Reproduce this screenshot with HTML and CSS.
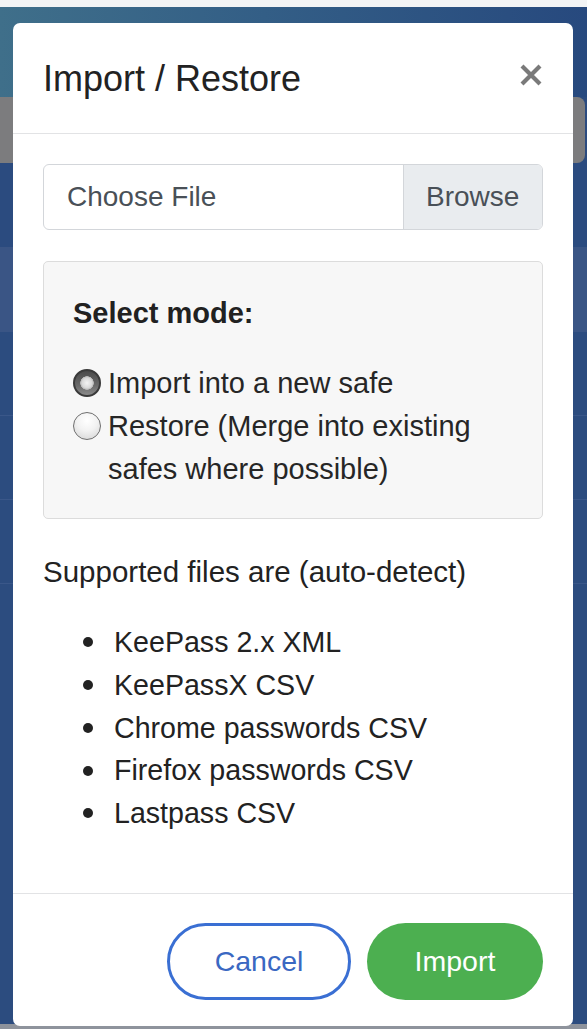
FILE: index.html
```html
<!DOCTYPE html>
<html>
<head>
<meta charset="utf-8">
<link rel="stylesheet" href="styles.css">
</head>
<body>
<div class="page">
  <div class="topstrip"></div>
  <div class="navbar">
  </div>
  <div class="toolbar"><div class="searchbar"></div></div>
  <div class="row row-a"></div>
  <div class="row row-b"></div>
  <div class="row"></div>
  <div class="row"></div>
  <div class="row"></div>
  <div class="row row-last"></div>
  <div class="bottomstrip"></div>

  <div class="modal">
    <div class="modal-header">
      <h1 class="modal-title">Import / Restore</h1>
      <button class="close" aria-label="Close">
        <svg width="22" height="22" viewBox="0 0 22 22"><path d="M2 2 L20 20 M20 2 L2 20" stroke="#7a7a7a" stroke-width="4.2" stroke-linecap="butt"/></svg>
      </button>
    </div>
    <div class="modal-body">
      <div class="file-input">
        <span class="file-label">Choose File</span>
        <span class="file-browse">Browse</span>
      </div>
      <div class="mode-box">
        <div class="mode-title">Select mode:</div>
        <div class="radios">
          <div class="radio-row">
            <span class="radio checked"></span>
            <span class="radio-text">Import into a new safe</span>
          </div>
          <div class="radio-row">
            <span class="radio"></span>
            <span class="radio-text">Restore (Merge into existing safes where possible)</span>
          </div>
        </div>
      </div>
      <p class="supported">Supported files are (auto-detect)</p>
      <ul class="types">
        <li>KeePass 2.x XML</li>
        <li>KeePassX CSV</li>
        <li>Chrome passwords CSV</li>
        <li>Firefox passwords CSV</li>
        <li>Lastpass CSV</li>
      </ul>
    </div>
    <div class="modal-footer">
      <button class="btn btn-cancel">Cancel</button>
      <button class="btn btn-import">Import</button>
    </div>
  </div>
</div>
</body>
</html>
```

FILE: styles.css
```css
html, body {
  margin: 0;
  padding: 0;
}
body {
  width: 587px;
  height: 1029px;
  overflow: hidden;
  background: #2c4c7f;
  font-family: "Liberation Sans", Arial, sans-serif;
  color: #212529;
}
.page {
  position: relative;
  width: 587px;
  height: 1029px;
  display: flex;
  flex-direction: column;
}
.topstrip {
  height: 7px;
  background: #f3f4f5;
}
.navbar {
  height: 90px;
  background: linear-gradient(90deg, #3f6f8a 0%, #335e86 45%, #27497e 100%);
}
.toolbar {
  height: 66px;
  background: #2b4b7f;
  display: flex;
}
.searchbar {
  flex: 1;
  margin: 0 2px 0 -10px;
  background: #7c7c7e;
  border-radius: 0 8px 8px 0;
}
.row {
  height: 83px;
  border-bottom: 1px solid #3a5789;
  background: #2c4c7f;
}
.row-a {
  height: 84px;
  border-bottom: none;
  background: #2b4b7f;
}
.row-b {
  height: 85px;
  background: #3a5585;
  border-bottom: none;
}
.row-last {
  flex: 1;
  border-bottom: none;
}
.bottomstrip {
  height: 5px;
  background: #8e939c;
}

/* modal overlays the page */
.modal {
  position: absolute;
  left: 13px;
  top: 23px;
  width: 560px;
  height: 1003px;
  background: #fff;
  border-radius: 7px;
  display: flex;
  flex-direction: column;
}
.modal-header {
  height: 110px;
  flex: none;
  border-bottom: 1px solid #e2e3e5;
  padding: 0 31px 0 30px;
  display: flex;
  align-items: center;
  justify-content: space-between;
}
.modal-title {
  margin: 0;
  font-size: 36px;
  font-weight: 400;
  color: #222;
  line-height: 44px;
  padding-top: 1px;
}
.close {
  border: none;
  background: none;
  padding: 0;
  width: 22px;
  height: 22px;
  margin-top: -6px;
  display: block;
}
.close svg { display: block; }

.modal-body {
  padding: 30px 30px 0 30px;
  flex: 1;
}
.file-input {
  height: 64px;
  border: 1px solid #d3d6da;
  border-radius: 6px;
  display: flex;
  align-items: stretch;
  font-size: 28px;
  color: #495057;
  overflow: hidden;
}
.file-label {
  flex: 1;
  padding-left: 23px;
  display: flex;
  align-items: center;
}
.file-browse {
  width: 116px;
  padding-left: 22px;
  background: #e9ecef;
  border-left: 1px solid #d3d6da;
  display: flex;
  align-items: center;
}

.mode-box {
  margin-top: 31px;
  height: 256px;
  box-sizing: content-box;
  border: 1px solid #dcdcdc;
  border-radius: 5px;
  background: #f7f7f7;
  padding: 0 29px;
  display: flex;
  flex-direction: column;
}
.mode-title {
  margin-top: 30px;
  font-size: 29px;
  font-weight: 700;
  line-height: 43px;
  color: #212121;
}
.radios {
  margin-top: 27px;
  display: flex;
  flex-direction: column;
}
.radio-row {
  display: flex;
  align-items: flex-start;
  font-size: 29px;
  line-height: 43px;
  color: #262626;
}
.radio {
  flex: none;
  width: 28px;
  height: 28px;
  margin-top: 7px;
  margin-right: 7px;
  border-radius: 50%;
  box-sizing: border-box;
  border: 1.5px solid #6f6f6f;
  background: radial-gradient(circle at 50% 30%, #ffffff 0%, #f2f2f2 45%, #d2d2d2 100%);
}
.radio.checked {
  border: 2px solid #3a3a3a;
  background:
    radial-gradient(circle at 50% 50%, #f3f3f3 0, #d8d8d8 5px, #b8b8b8 6.5px, transparent 7px),
    linear-gradient(180deg, #4a4a4a 0%, #6a6a6a 60%, #8a8a8a 100%);
}
.radio-text {
  flex: 1;
}

.supported {
  margin: 31px 0 0 0;
  font-size: 29.5px;
  line-height: 43px;
  color: #222;
}
.types {
  list-style: none;
  margin: 28px 0 0 0;
  padding: 0;
}
.types li {
  display: flex;
  align-items: center;
  font-size: 28.6px;
  line-height: 42.75px;
  color: #222;
}
.types li::before {
  content: "";
  flex: none;
  width: 10px;
  height: 10px;
  border-radius: 50%;
  background: #222;
  margin-left: 40px;
  margin-right: 21px;
}

.modal-footer {
  height: 133px;
  flex: none;
  border-top: 1px solid #e2e3e5;
  padding: 29px 30px 0 30px;
  box-sizing: border-box;
  display: flex;
  justify-content: flex-end;
  align-items: flex-start;
  gap: 16px;
}
.btn {
  height: 77px;
  border-radius: 39px;
  font-family: "Liberation Sans", Arial, sans-serif;
  font-size: 28.5px;
  display: flex;
  align-items: center;
  justify-content: center;
  box-sizing: border-box;
  padding: 0;
}
.btn-cancel {
  width: 184px;
  background: #fff;
  border: 3px solid #3a6fd3;
  color: #3a68c2;
}
.btn-import {
  width: 176px;
  background: #4caf50;
  border: none;
  color: #fff;
}
```
